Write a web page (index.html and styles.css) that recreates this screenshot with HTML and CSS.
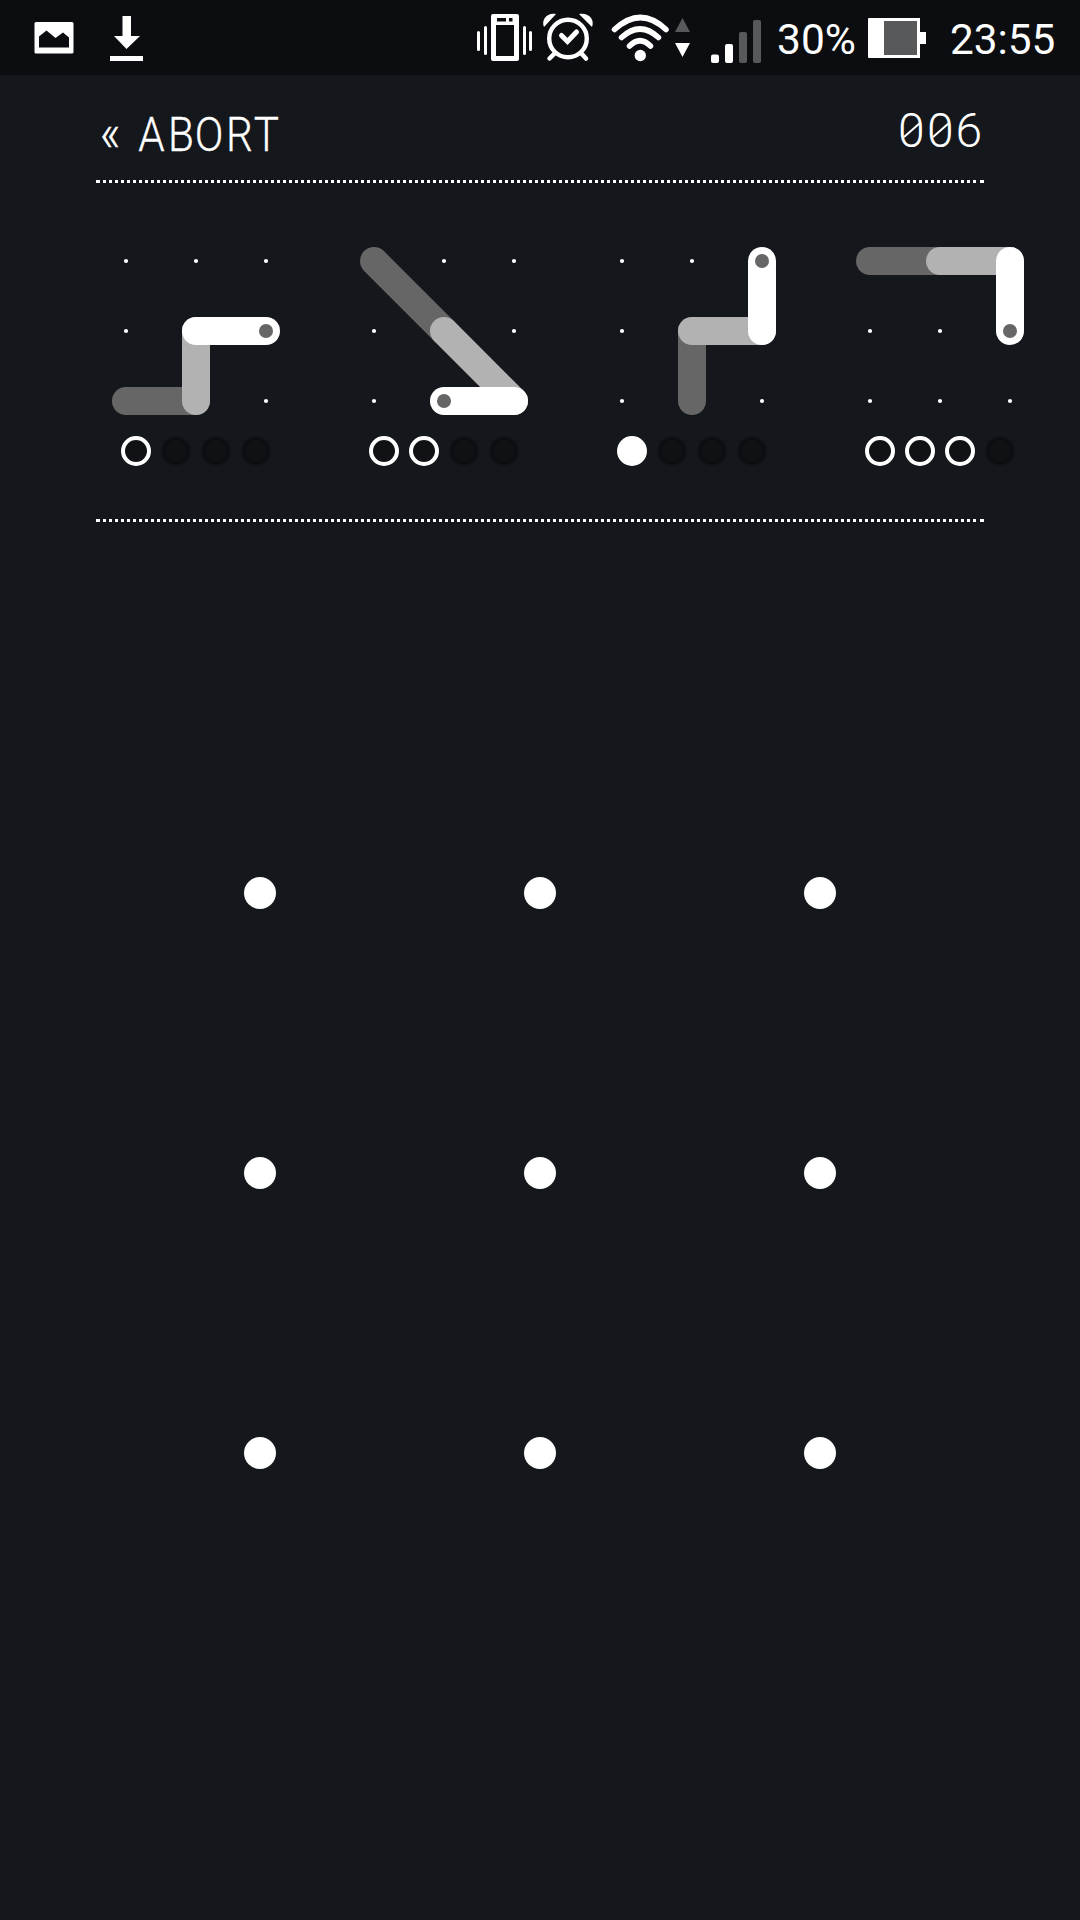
FILE: index.html
```html
<!DOCTYPE html>
<html lang="en">
<head>
<meta charset="utf-8">
<title>Pattern game</title>
<link rel="stylesheet" href="styles.css">
</head>
<body>
<header class="status">
  <svg class="status-left" width="160" height="75" viewBox="0 0 160 75">
    <path fill="#fff" fill-rule="evenodd" d="M36 22H72Q73.500 22 73.500 23.500V52Q73.500 53.500 72 53.500H36Q34.500 53.500 34.500 52V23.500Q34.500 22 36 22ZM39 36.500V47.500H69V37.500L63 32.500L55.500 38L46.500 30.500Z"/>
    <path fill="#fff" d="M122.500 16H131V36H140L126.500 49L114 36H122.500ZM110 56H143V61H110Z"/>
  </svg>
  <svg class="status-right" width="300" height="75" viewBox="470 0 300 75">
    <g fill="none" stroke="#fff" stroke-linecap="round">
      <path stroke-width="3" d="M478.500 32.500V49.500M485.500 27.500V53.500M524.500 27.500V53.500M530.500 32.500V49.500"/>
      <circle cx="568" cy="38.500" r="18.800" stroke-width="4.400"/>
      <path stroke-width="4.500" d="M555 53L549.500 58.500M581 53L586 58.500"/>
      <path stroke-width="5" stroke-linejoin="miter" d="M561.500 35.500L567.500 41.500L576.500 32"/>
      <path stroke-width="5.500" d="M614.500 29.500Q640.500 5.500 666 29.500M621.500 37.500Q640 20.500 658.500 37.500M629.500 46Q640 35.500 650.500 46"/>
    </g>
    <path fill="#fff" fill-rule="evenodd" d="M493 14H517Q519 14 519 16V59Q519 61 517 61H493Q491 61 491 59V16Q491 14 493 14ZM496 25V56H514V25ZM497 18V21.500H506V18ZM509 18V21.500H512.500V18Z"/>
    <path fill="#fff" d="M544 27C541 20 547 12 556 14ZM592 27C595 20 589 12 579 14Z"/>
    <circle cx="640.300" cy="55.500" r="5.700" fill="#fff"/>
    <path fill="#58595b" d="M682.500 18L690 32H675Z"/>
    <path fill="#fff" d="M682.500 57L690 43H675Z"/>
    <rect x="711" y="54.500" width="8" height="8.500" rx="2" fill="#fff"/>
    <rect x="725" y="44" width="8" height="19" rx="2" fill="#fff"/>
    <rect x="739" y="32" width="8" height="31" rx="2" fill="#58595b"/>
    <rect x="753" y="20" width="8" height="43" rx="2" fill="#58595b"/>
  </svg>
  <span class="percent">30%</span>
  <span class="battery"><i></i></span>
  <time class="clock">23:55</time>
</header>
<main>
  <div class="topbar">
    <svg class="label" width="190" height="75" viewBox="96 105 190 75"><text class="abort" transform="scale(.88 1)" y="151" x="125 158 172.200 205.500 237.500 272 302.800"><tspan class="back">«</tspan> ABORT</text></svg>
    <svg class="label" width="100" height="75" viewBox="884 105 100 75"><text y="147" x="911.400 940.400 968.800">006</text><path class="slash" d="M904 137L920 123M933 137L949 123"/></svg>
  </div>
  <div class="rule"></div>
  <section class="patterns">
    <div class="pattern">
      <svg width="168" height="168" viewBox="-14 -14 168 168"><use href="#dots"/><path class="s1" d="M0 140H70"/><path class="s2" d="M70 140V70"/><path class="s3" d="M70 70H140"/><circle class="end" cx="140" cy="70" r="7"/></svg>
      <div class="tries"><i class="miss"></i><i></i><i></i><i></i></div>
    </div>
    <div class="pattern">
      <svg width="168" height="168" viewBox="-14 -14 168 168"><use href="#dots"/><path class="s1" d="M0 0L70 70"/><path class="s2" d="M70 70L140 140"/><path class="s3" d="M140 140H70"/><circle class="end" cx="70" cy="140" r="7"/></svg>
      <div class="tries"><i class="miss"></i><i class="miss"></i><i></i><i></i></div>
    </div>
    <div class="pattern">
      <svg width="168" height="168" viewBox="-14 -14 168 168"><use href="#dots"/><path class="s1" d="M70 140V70"/><path class="s2" d="M70 70H140"/><path class="s3" d="M140 70V0"/><circle class="end" cx="140" cy="0" r="7"/></svg>
      <div class="tries"><i class="hit"></i><i></i><i></i><i></i></div>
    </div>
    <div class="pattern">
      <svg width="168" height="168" viewBox="-14 -14 168 168"><use href="#dots"/><path class="s1" d="M0 0H70"/><path class="s2" d="M70 0H140"/><path class="s3" d="M140 0V70"/><circle class="end" cx="140" cy="70" r="7"/></svg>
      <div class="tries"><i class="miss"></i><i class="miss"></i><i class="miss"></i><i></i></div>
    </div>
  </section>
  <div class="rule"></div>
  <section class="board"><i></i><i></i><i></i><i></i><i></i><i></i><i></i><i></i><i></i></section>
</main>
<svg class="defs" width="0" height="0"><defs><g id="dots" fill="#fff">
  <circle r="2.100"/><circle cx="70" r="2.100"/><circle cx="140" r="2.100"/>
  <circle cy="70" r="2.100"/><circle cx="70" cy="70" r="2.100"/><circle cx="140" cy="70" r="2.100"/>
  <circle cy="140" r="2.100"/><circle cx="70" cy="140" r="2.100"/><circle cx="140" cy="140" r="2.100"/>
</g></defs></svg>
</body>
</html>
```
FILE: styles.css
```css
* { box-sizing: border-box; }
body { margin: 0; width: 1080px; height: 1920px; overflow: hidden; background: #14181c; color: #fff; font-family: Roboto, sans-serif; }
svg { display: block; flex: none; }
.status { display: flex; align-items: center; height: 75px; background: #0b0d10; }
.status-right { margin-left: 310px; }
.percent { flex: none; width: 98px; padding: 5px 0 0 7px; font-size: 42.5px; line-height: 52px; white-space: nowrap; }
.battery { display: flex; flex: none; width: 58px; height: 40px; padding: 3px 9px 3px 16px; background: linear-gradient(#fff, #fff) 0 0 / 52px 40px no-repeat, linear-gradient(#fff, #fff) 52px 14px / 6px 12px no-repeat; border-radius: 1px; }
.battery i { width: 33px; height: 34px; background: #58595b; }
.clock { margin-left: 24px; padding-top: 5px; font-size: 42.3px; line-height: 52px; }
.topbar { display: flex; justify-content: space-between; height: 105px; padding: 30px 96px 0; }
.label { overflow: visible; }
.label text { fill: #fff; font: 300 48px Roboto, sans-serif; text-anchor: middle; white-space: pre; }
.label .abort { stroke: #fff; stroke-width: 0.3px; }
.label .back { font-size: 51px; }
.slash { stroke: #fff; stroke-width: 2; }
.rule {
  width: 888px;
  height: 3px;
  margin-left: 96px;
  background:
    linear-gradient(#fff, #fff) 0 0 / 4px 3px no-repeat,
    linear-gradient(#fff, #fff) 100% 0 / 4px 3px no-repeat,
    repeating-linear-gradient(90deg, #fff 0 3px, transparent 3px 6px) 7px 0 / 873px 3px no-repeat;
}
.patterns { display: flex; gap: 80px; height: 336px; padding: 64px 0 0 112px; }
.pattern { flex: none; width: 168px; }
.s1, .s2, .s3 { fill: none; stroke-width: 28; stroke-linecap: round; }
.s1 { stroke: #666; }
.s2 { stroke: #b2b2b2; }
.s3 { stroke: #fff; }
.end { fill: #666; }
.tries { display: flex; gap: 10px; padding: 21px 0 0 9px; }
.tries i { width: 30px; height: 30px; flex: none; border: 2px solid #101316; border-radius: 50%; background: #101114; box-shadow: inset 0 0 0 2px #0c0d10; }
.tries .miss { border: 4px solid #fff; box-shadow: none; background: #111216; }
.tries .hit { border-color: #fff; box-shadow: none; background: #fff; }
.board { display: grid; grid-template-columns: repeat(3, 32px); gap: 248px; padding: 355px 0 0 244px; }
.board i { width: 32px; height: 32px; border-radius: 50%; background: #fff; }
.defs { position: absolute; }
```
